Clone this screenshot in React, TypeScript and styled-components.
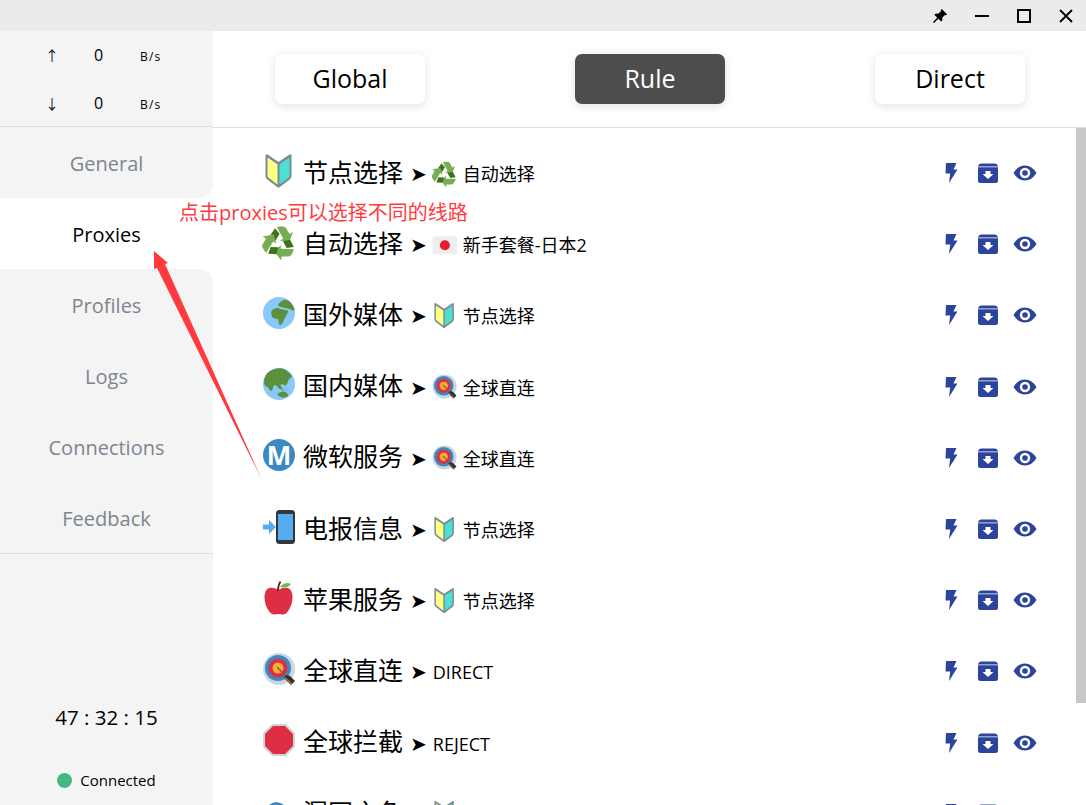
import React from "react";
import styled, { createGlobalStyle } from "styled-components";

type TEmojiName = "beginner" | "recycle" | "africa" | "asia" | "metro" | "phone" | "apple" | "target" | "stop" | "japan" | "fish";

type TProxyGroup = {
  icon: TEmojiName;
  name: string;
  subIcon?: TEmojiName;
  current: string;
}

const navItems = ["General", "Proxies", "Profiles", "Logs", "Connections", "Feedback"];

const groups: TProxyGroup[] = [
  {icon: "beginner", name: "节点选择", subIcon: "recycle", current: "自动选择"},
  {icon: "recycle", name: "自动选择", subIcon: "japan", current: "新手套餐-日本2"},
  {icon: "africa", name: "国外媒体", subIcon: "beginner", current: "节点选择"},
  {icon: "asia", name: "国内媒体", subIcon: "target", current: "全球直连"},
  {icon: "metro", name: "微软服务", subIcon: "target", current: "全球直连"},
  {icon: "phone", name: "电报信息", subIcon: "beginner", current: "节点选择"},
  {icon: "apple", name: "苹果服务", subIcon: "beginner", current: "节点选择"},
  {icon: "target", name: "全球直连", current: "DIRECT"},
  {icon: "stop", name: "全球拦截", current: "REJECT"},
  {icon: "fish", name: "漏网之鱼", subIcon: "beginner", current: "节点选择"},
];

const GlobalStyle = createGlobalStyle`
  html, body {
    margin: 0;
    padding: 0;
    height: 100%;
    overflow: hidden;
    background: #fff;
  }
  * {
    box-sizing: border-box;
  }
`;

const Page = styled.div`
  position: relative;
  width: 1086px;
  height: 805px;
  display: flex;
  flex-direction: column;
  overflow: hidden;
  color: #000;
  font-family: "Open Sans", "Noto Sans CJK SC", sans-serif;
`;

const TitleBar = styled.div`
  height: 31px;
  flex: none;
  background: #ebebeb;
  display: flex;
  justify-content: flex-end;
  align-items: center;
  padding-right: 12px;
  gap: 26px;
`;

const WindowIcon = styled.svg`
  width: 16px;
  height: 16px;
  display: block;
`;

const Body = styled.div`
  flex: 1;
  min-height: 0;
  display: flex;
`;

const Sidebar = styled.aside`
  width: 213px;
  flex: none;
  display: flex;
  flex-direction: column;
  background: #fff;
`;

const Traffic = styled.div`
  height: 96px;
  flex: none;
  background: #f4f4f4;
  border-bottom: 1px solid #e0e0e0;
`;

const TrafficRow = styled.div`
  height: 48px;
  display: grid;
  grid-template-columns: 99px 46px 68px;
  align-items: center;
  font-size: 16px;
`;

const TrafficArrow = styled.span`
  text-align: right;
  padding-right: 40px;
  font-size: 14px;
  color: #111;
  font-family: "Noto Sans CJK SC", sans-serif;
`;

const TrafficValue = styled.span`
  margin-left: -5px;
  text-align: left;
`;

const TrafficUnit = styled.span`
  font-size: 12px;
  letter-spacing: 1.2px;
  margin-left: -5px;
  padding-top: 2px;
`;

const Nav = styled.nav`
  display: flex;
  flex-direction: column;
`;

const NavItem = styled.div<{ $active: boolean; $before: boolean; $after: boolean }>`
  height: 71px;
  padding-top: 1px;
  display: flex;
  align-items: center;
  justify-content: center;
  font-size: 20px;
  color: ${props => props.$active ? "#000" : "#7d8590"};
  background: ${props => props.$active ? "#fff" : "#f4f4f4"};
  border-bottom-right-radius: ${props => props.$before ? "14px" : "0"};
  border-top-right-radius: ${props => props.$after ? "14px" : "0"};
`;

const SideFooter = styled.div`
  flex: 1;
  background: #f4f4f4;
  border-top: 1px solid #e0e0e0;
  display: flex;
  flex-direction: column;
  align-items: center;
  justify-content: flex-end;
`;

const Timer = styled.div`
  font-size: 20.5px;
  line-height: 28px;
  margin-bottom: 39px;
  white-space: pre;
`;

const Status = styled.div`
  display: flex;
  align-items: center;
  gap: 8px;
  font-size: 15px;
  line-height: 20px;
  margin-bottom: 15px;
`;

const StatusDot = styled.span`
  width: 15px;
  height: 15px;
  border-radius: 50%;
  background: #43b883;
`;

const Main = styled.main`
  flex: 1;
  min-width: 0;
  display: flex;
  flex-direction: column;
`;

const ModeBar = styled.div`
  height: 97px;
  flex: none;
  border-bottom: 1px solid #e0e0e0;
  display: flex;
  align-items: center;
  justify-content: space-between;
  padding: 0 61px 1px 62px;
`;

const ModeButton = styled.button<{ $active: boolean }>`
  width: 150px;
  height: 50px;
  border: none;
  border-radius: 7px;
  padding: 0 0 2px;
  font: inherit;
  font-size: 25px;
  background: ${props => props.$active ? "#4d4d4d" : "#fff"};
  color: ${props => props.$active ? "#fff" : "#000"};
  box-shadow: 0 2px 10px rgba(0, 0, 0, 0.12);
`;

const GroupList = styled.div`
  position: relative;
  flex: 1;
  min-height: 0;
  overflow: hidden;
  padding-top: 8px;
`;

const ScrollThumb = styled.div`
  position: absolute;
  top: 0;
  right: 0;
  width: 10px;
  height: 575px;
  background: #c8c8c8;
`;

const Row = styled.div`
  height: 71.2px;
  display: flex;
  align-items: center;
  padding: 0 49px 0 48px;
`;

const MainIcon = styled.svg`
  width: 36px;
  height: 36px;
  flex: none;
  display: block;
  margin-top: -2px;
`;

const GroupName = styled.span`
  font-size: 25px;
  line-height: 36px;
  margin-left: 6px;
  white-space: nowrap;
`;

const Pointer = styled.span`
  font-family: "DejaVu Sans", sans-serif;
  font-size: 20px;
  line-height: 24px;
  margin: 5px 0 0 7px;
`;

const SubIcon = styled.svg`
  width: 27px;
  height: 27px;
  flex: none;
  display: block;
  margin: 3px 5px 0 4px;
`;

const Current = styled.span<{ $plain: boolean }>`
  font-size: 18px;
  line-height: 24px;
  margin: 5px 0 0 ${props => props.$plain ? "6px" : "0"};
  white-space: nowrap;
`;

const Actions = styled.div`
  margin-left: auto;
  margin-top: 3px;
  display: flex;
  align-items: center;
  color: #2c449b;
`;

const ActionIcon = styled.svg<{ $width: number; $gap: number }>`
  width: ${props => props.$width}px;
  height: 20px;
  display: block;
  margin-left: ${props => props.$gap}px;
  fill: currentColor;
`;

const Annotation = styled.div`
  position: absolute;
  left: 179px;
  top: 199px;
  font-size: 20px;
  line-height: 28px;
  color: #ff3b3f;
  white-space: nowrap;
`;

const AnnotationArrow = styled.svg`
  position: absolute;
  left: 0;
  top: 0;
  width: 1086px;
  height: 805px;
  pointer-events: none;
`;

const Emoji = ({name}: { name: TEmojiName }) => {
  switch (name) {
    case "beginner":
      return (
        <>
          <path d="M6.5 1.5 17.5 9 28.5 1.5 Q30.5 0.6 30.5 3 V23 Q30.5 25 29 26.3 L18.5 34.3 Q17.5 35 16.5 34.3 L6 26.3 Q4.5 25 4.5 23 V3 Q4.5 0.6 6.5 1.5Z" fill="#7c8a94"/>
          <path d="M6.5 4.6 16.5 11.2 V31.6 L7.5 24.8 Q6.5 24 6.5 23Z" fill="#ffff83"/>
          <path d="M28.5 4.6 18.5 11.2 V31.6 L27.5 24.8 Q28.5 24 28.5 23Z" fill="#4ce0d4"/>
        </>
      );
    case "recycle":
      return (
        <g>
          {[0, 120, 240].map(angle => (
            <g key={angle} transform={`rotate(${angle} 18 19)`}>
              <path d="M16 3.2 Q17 2.4 18.5 2.4 H22 Q24 2.4 25 4 L28.5 10 32 8 28 18.5 19 16.5 22.2 14.6 18.8 8.4Z" fill="#77ae52"/>
              <path d="M9.5 11 14 4.2 18.6 9.8 14.6 16.4Z" fill="#3e721d"/>
            </g>
          ))}
        </g>
      );
    case "africa":
      return (
        <>
          <circle cx="18" cy="18" r="16" fill="#88c9f9"/>
          <path d="M10 17 Q12 13 17 13 L21 14.5 Q24 15 27 15.5 Q28 17 26 19 L24 23 Q22 28 20 30 Q18 31 18 28 L17 24 Q13 24 11 22Z" fill="#5c913b"/>
          <path d="M17 10 Q20 5 25 4.5 Q31 7 33.5 14 Q33 17 31 15 Q27 13 24 13 L20 12 Q18 12 17 10Z" fill="#5c913b"/>
        </>
      );
    case "asia":
      return (
        <>
          <circle cx="18" cy="18" r="16" fill="#88c9f9"/>
          <path d="M3 17 Q3 8 10 4.5 Q15 2 20 2.3 Q27 4 31 10 Q30 13 28 13 L26 18 Q24 21 22 18 L19 19 L22 23 Q18 24 16 20 L13 19 L11 25 Q8 25 7 21 Q4 21 3 17Z" fill="#5c913b"/>
          <path d="M16 28 Q20 25 24 26 Q27 27 27 30 Q24 32 21 31.5 Q18 31 16 28Z" fill="#5c913b"/>
          <path d="M20 24 L24 24.5 L22 25.5Z" fill="#5c913b"/>
        </>
      );
    case "metro":
      return (
        <>
          <circle cx="18" cy="18" r="16" fill="#3b88c3"/>
          <text x="18" y="27.5" textAnchor="middle" fontSize="26" fontWeight="700" fontFamily="Open Sans, sans-serif" fill="#fff">M</text>
        </>
      );
    case "phone":
      return (
        <>
          <path d="M2 15.5 H8 V11 L15 18 8 25 V20.5 H2 Q1.5 18 2 15.5Z" fill="#55acee"/>
          <rect x="15" y="1" width="19" height="34" rx="3.5" fill="#31373d"/>
          <rect x="17" y="5" width="15" height="26" fill="#55acee"/>
        </>
      );
    case "apple":
      return (
        <>
          <path d="M17.5 10 Q22 7 27 8 Q31.5 10 31.5 17 Q31.5 26 26 32.5 Q23.5 35 20.5 34.2 Q17.5 33.6 14.5 34.2 Q11.5 35 9 32.5 Q3.5 26 3.5 17 Q3.5 10 8 8 Q13 7 17.5 10Z" fill="#dd2e44"/>
          <path d="M19 7 Q22 3 27 3 L30 4 Q27 8 22 7.5Z" fill="#77b255"/>
          <path d="M17 11 Q17 5 19.5 1.5" stroke="#662113" strokeWidth="1.8" fill="none"/>
        </>
      );
    case "target":
      return (
        <>
          <circle cx="18" cy="18" r="16" fill="#ccd6dd"/>
          <circle cx="17" cy="17" r="13" fill="#3b88c3"/>
          <circle cx="17" cy="17" r="9.5" fill="#dd2e44"/>
          <circle cx="17" cy="17" r="5.5" fill="#ffac33"/>
          <path d="M16 16 L27 27" stroke="#8a5a44" strokeWidth="1.5"/>
          <path d="M23 26 L26 24 L29 25 L34 30 L30 34 L25 29Z" fill="#292f33"/>
          <path d="M24 26.5 L31 33" stroke="#c1694f" strokeWidth="1.2"/>
        </>
      );
    case "stop":
      return (
        <>
          <path d="M11 2 H25 L34 11 V25 L25 34 H11 L2 25 V11Z" fill="#ccd6dd"/>
          <path d="M12 4 H24 L32 12 V24 L24 32 H12 L4 24 V12Z" fill="#dd2e44"/>
        </>
      );
    case "japan":
      return (
        <>
          <rect x="2" y="7" width="33" height="24" rx="3" fill="#eeeeee"/>
          <circle cx="18.5" cy="19" r="6.7" fill="#ed1b2f"/>
        </>
      );
    case "fish":
      return (
        <path d="M2 22 Q6 10 15 9 Q24 10 28 18 L34 12 V32 L28 26 Q20 35 10 32 Q4 30 2 22Z" fill="#3b88c3"/>
      );
  }
};

const App = () => {
  return (
    <Page>
      <GlobalStyle/>
      <TitleBar>
        <WindowIcon viewBox="0 0 16 16">
          <path d="M9.8 1 15 6.2 14 7.2 13 6.9 10.4 9.5 10.3 12.6 9.2 13.6 6.3 10.8 2 15 1 14 5.2 9.7 2.4 6.8 3.4 5.7 6.5 5.6 9.1 3 8.8 2Z" fill="#000"/>
        </WindowIcon>
        <WindowIcon viewBox="0 0 16 16">
          <path d="M1 8 H15" stroke="#000" strokeWidth="2"/>
        </WindowIcon>
        <WindowIcon viewBox="0 0 16 16">
          <rect x="2" y="2" width="12" height="12" stroke="#000" strokeWidth="2" fill="none"/>
        </WindowIcon>
        <WindowIcon viewBox="0 0 16 16">
          <path d="M2 2 L14 14 M14 2 L2 14" stroke="#000" strokeWidth="1.8"/>
        </WindowIcon>
      </TitleBar>
      <Body>
        <Sidebar>
          <Traffic>
            <TrafficRow>
              <TrafficArrow>↑</TrafficArrow>
              <TrafficValue>0</TrafficValue>
              <TrafficUnit>B/s</TrafficUnit>
            </TrafficRow>
            <TrafficRow>
              <TrafficArrow>↓</TrafficArrow>
              <TrafficValue>0</TrafficValue>
              <TrafficUnit>B/s</TrafficUnit>
            </TrafficRow>
          </Traffic>
          <Nav>
            {navItems.map((item, index) => (
              <NavItem key={item} $active={index === 1} $before={index === 0} $after={index === 2}>{item}</NavItem>
            ))}
          </Nav>
          <SideFooter>
            <Timer>47 : 32 : 15</Timer>
            <Status>
              <StatusDot/>
              Connected
            </Status>
          </SideFooter>
        </Sidebar>
        <Main>
          <ModeBar>
            <ModeButton $active={false}>Global</ModeButton>
            <ModeButton $active={true}>Rule</ModeButton>
            <ModeButton $active={false}>Direct</ModeButton>
          </ModeBar>
          <GroupList>
            {groups.map(group => (
              <Row key={group.name}>
                <MainIcon viewBox="0 0 36 36"><Emoji name={group.icon}/></MainIcon>
                <GroupName>{group.name}</GroupName>
                <Pointer>➤</Pointer>
                {group.subIcon && <SubIcon viewBox="0 0 36 36"><Emoji name={group.subIcon}/></SubIcon>}
                <Current $plain={!group.subIcon}>{group.current}</Current>
                <Actions>
                  <ActionIcon $width={14} $gap={0} viewBox="0 0 14 20">
                    <path d="M2 0 H12.5 L9.5 6.5 H13.5 L5 20 6.2 10.5 H1.5Z"/>
                  </ActionIcon>
                  <ActionIcon $width={20} $gap={20} viewBox="0 0 20 20">
                    <path d="M3 0.5 H17 Q19 0.5 20 3 V3.6 H0 V3 Q1 0.5 3 0.5Z"/>
                    <path fillRule="evenodd" d="M0 4.2 H20 V17.5 Q20 20 17.5 20 H2.5 Q0 20 0 17.5Z M7.5 8 V11 H4.5 L10 16 15.5 11 H12.5 V8Z"/>
                  </ActionIcon>
                  <ActionIcon $width={24} $gap={15} viewBox="0 0 24 20">
                    <path fillRule="evenodd" d="M0.5 10 Q5 2.5 12 2.5 Q19 2.5 23.5 10 Q19 17.5 12 17.5 Q5 17.5 0.5 10Z M12 4.8 A5.2 5.2 0 1 0 12 15.2 A5.2 5.2 0 1 0 12 4.8Z M12 7.2 A2.8 2.8 0 1 1 12 12.8 A2.8 2.8 0 1 1 12 7.2Z"/>
                  </ActionIcon>
                </Actions>
              </Row>
            ))}
            <ScrollThumb/>
          </GroupList>
        </Main>
      </Body>
      <Annotation>点击proxies可以选择不同的线路</Annotation>
      <AnnotationArrow viewBox="0 0 1086 805">
        <polygon points="154,251 168,263 165,264 262,480 157,268 154,269" fill="#ff3b3f"/>
      </AnnotationArrow>
    </Page>
  );
};

export default App;
